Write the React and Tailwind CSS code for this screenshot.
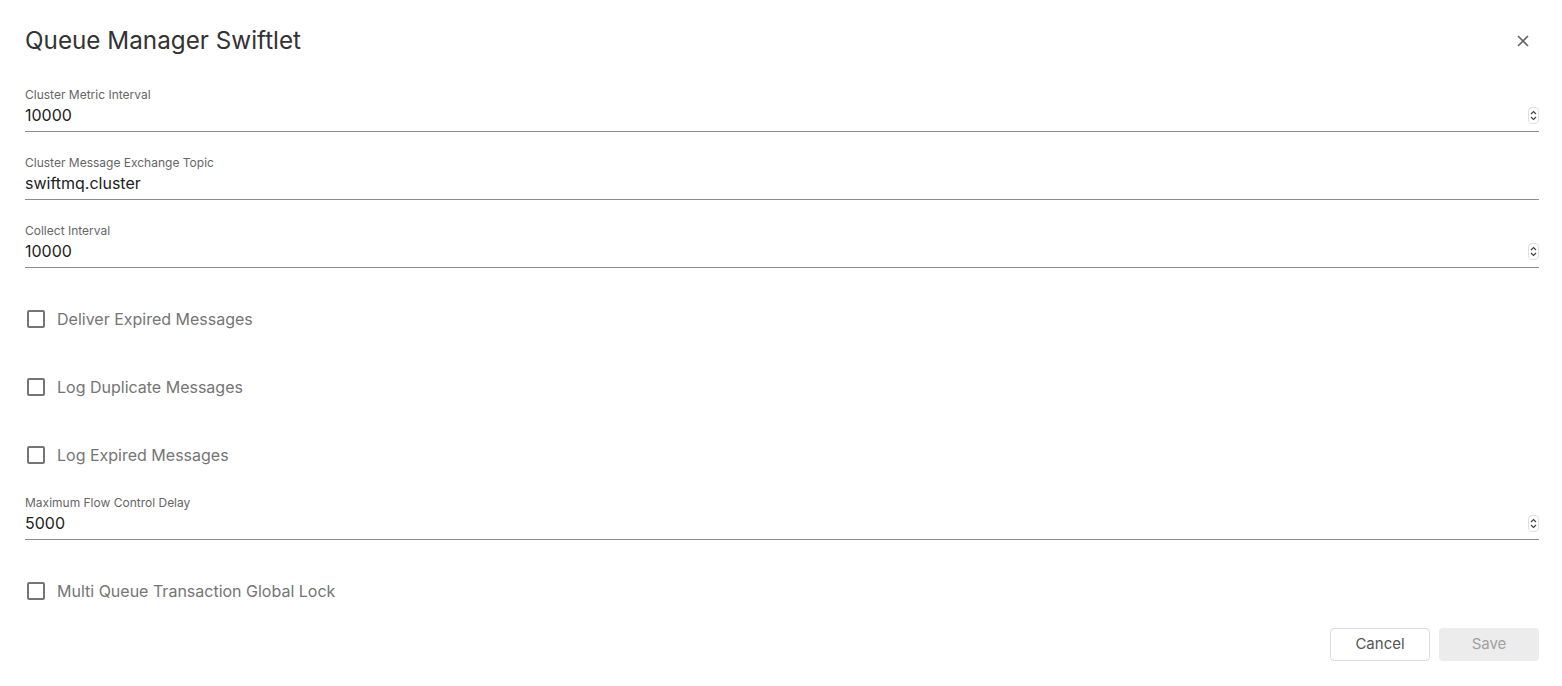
const Spinner = () => (
  <div className="w-[11px] h-[17px] border border-[#e0e0e0] rounded-[4px] flex flex-col items-center justify-center gap-[1px]">
    <svg width="7" height="5" viewBox="0 0 7 5" fill="none">
      <path d="M1 4 L3.5 1.5 L6 4" stroke="#444" strokeWidth="1.2" />
    </svg>
    <svg width="7" height="5" viewBox="0 0 7 5" fill="none">
      <path d="M1 1 L3.5 3.5 L6 1" stroke="#444" strokeWidth="1.2" />
    </svg>
  </div>
);

const Field = ({ label, value, number }) => (
  <div className="h-[68px] flex flex-col">
    <div className="text-[12px] leading-[16px] text-[#666]">{label}</div>
    <div className="h-[29px] flex items-start justify-between border-b border-[#8c8c8c]">
      <span className="text-[16px] leading-[24px] text-[#222]">{value}</span>
      {number && (
        <div className="mt-[4px]">
          <Spinner />
        </div>
      )}
    </div>
  </div>
);

const Check = ({ label }) => (
  <div className="h-[68px] flex items-start gap-[12px] pl-[2px] pt-[16px]">
    <div className="w-[18px] h-[18px] mt-[3px] border-2 border-[#757575] rounded-[2px]" />
    <span className="text-[16px] leading-[24px] text-[#757575]">{label}</span>
  </div>
);

const App = () => {
  return (
    <div className="w-[1562px] h-[686px] bg-white pl-[24px] pr-[23px] font-['Inter','Liberation_Sans',sans-serif] overflow-hidden">
      {/* Header */}
      <div className="flex items-center justify-between pt-[24px] h-[58px]">
        <h1 className="text-[24.25px] leading-[34px] text-[#333] pl-[1px]">Queue Manager Swiftlet</h1>
        <svg width="12" height="12" viewBox="0 0 12 12" className="mr-[10px]">
          <path d="M1 1 L11 11 M11 1 L1 11" stroke="#666" strokeWidth="1.6" />
        </svg>
      </div>

      {/* Form */}
      <div className="mt-[29px] pl-[1px]">
        <Field label="Cluster Metric Interval" value="10000" number />
        <Field label="Cluster Message Exchange Topic" value="swiftmq.cluster" />
        <Field label="Collect Interval" value="10000" number />
        <Check label="Deliver Expired Messages" />
        <Check label="Log Duplicate Messages" />
        <Check label="Log Expired Messages" />
        <Field label="Maximum Flow Control Delay" value="5000" number />
        <Check label="Multi Queue Transaction Global Lock" />
      </div>

      {/* Actions */}
      <div className="flex justify-end gap-[9px] -mt-[3px]">
        <button className="w-[100px] h-[33px] border border-[#dcdcdc] rounded-[4px] text-[15px] text-[#555] bg-white">
          Cancel
        </button>
        <button className="w-[100px] h-[33px] rounded-[4px] text-[15px] text-[#a0a0a0] bg-[#ececec]">
          Save
        </button>
      </div>
    </div>
  );
};

export default App;
